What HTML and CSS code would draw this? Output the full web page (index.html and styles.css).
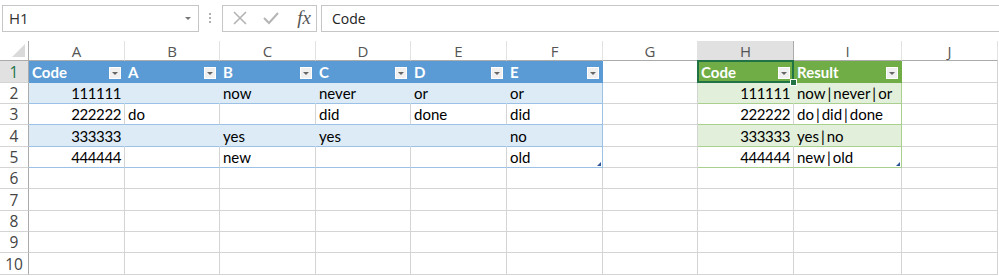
FILE: index.html
```html
<!DOCTYPE html>
<html lang="en">
<head>
  <meta charset="UTF-8" />
  <title>Sheet1</title>
  <link rel="stylesheet" href="styles.css">
</head>
<body>
  <div class="formula-bar">
    <div class="name-box">
      <span>H1</span>
      <span class="nb-arrow"></span>
    </div>
    <div class="grip"><i></i><i></i><i></i></div>
    <div class="fx-box">
      <svg class="ico" width="16" height="16" viewBox="0 0 16 16"><path d="M2 2 L14 14 M14 2 L2 14" stroke="#b4b4b4" stroke-width="1.6" fill="none"/></svg>
      <svg class="ico" width="18" height="16" viewBox="0 0 18 16"><path d="M2 8 L7 13 L16 3" stroke="#b4b4b4" stroke-width="2" fill="none"/></svg>
      <span class="fx">fx</span>
    </div>
    <div class="formula-input">Code</div>
  </div>

  <div class="sheet">
    <!-- column headers -->
    <div class="corner"></div>
    <div class="ch">A</div>
    <div class="ch">B</div>
    <div class="ch">C</div>
    <div class="ch">D</div>
    <div class="ch">E</div>
    <div class="ch">F</div>
    <div class="ch">G</div>
    <div class="ch ch-sel">H</div>
    <div class="ch">I</div>
    <div class="ch">J</div>

    <!-- row 1 -->
    <div class="rh rh-sel">1</div>
    <div class="c bh"><span>Code</span><span class="flt"></span></div>
    <div class="c bh"><span>A</span><span class="flt"></span></div>
    <div class="c bh"><span>B</span><span class="flt"></span></div>
    <div class="c bh"><span>C</span><span class="flt"></span></div>
    <div class="c bh"><span>D</span><span class="flt"></span></div>
    <div class="c bh"><span>E</span><span class="flt"></span></div>
    <div class="c"></div>
    <div class="c gh active"><span>Code</span><span class="flt"></span></div>
    <div class="c gh"><span>Result</span><span class="flt"></span></div>
    <div class="c"></div>

    <!-- row 2 -->
    <div class="rh">2</div>
    <div class="c bb num">111111</div>
    <div class="c bb"></div>
    <div class="c bb">now</div>
    <div class="c bb">never</div>
    <div class="c bb">or</div>
    <div class="c bb b-end">or</div>
    <div class="c"></div>
    <div class="c gb num">111111</div>
    <div class="c gb g-end">now<span class="sep">|</span>never<span class="sep">|</span>or</div>
    <div class="c"></div>

    <!-- row 3 -->
    <div class="rh">3</div>
    <div class="c bw num">222222</div>
    <div class="c bw">do</div>
    <div class="c bw"></div>
    <div class="c bw">did</div>
    <div class="c bw">done</div>
    <div class="c bw b-end">did</div>
    <div class="c"></div>
    <div class="c gw num">222222</div>
    <div class="c gw g-end">do<span class="sep">|</span>did<span class="sep">|</span>done</div>
    <div class="c"></div>

    <!-- row 4 -->
    <div class="rh">4</div>
    <div class="c bb num">333333</div>
    <div class="c bb"></div>
    <div class="c bb">yes</div>
    <div class="c bb">yes</div>
    <div class="c bb"></div>
    <div class="c bb b-end">no</div>
    <div class="c"></div>
    <div class="c gb num">333333</div>
    <div class="c gb g-end">yes<span class="sep">|</span>no</div>
    <div class="c"></div>

    <!-- row 5 -->
    <div class="rh">5</div>
    <div class="c bw num">444444</div>
    <div class="c bw"></div>
    <div class="c bw">new</div>
    <div class="c bw"></div>
    <div class="c bw"></div>
    <div class="c bw b-end resize">old</div>
    <div class="c"></div>
    <div class="c gw num">444444</div>
    <div class="c gw g-end resize">new<span class="sep">|</span>old</div>
    <div class="c"></div>

    <div class="rh">6</div>
    <div class="c"></div><div class="c"></div><div class="c"></div><div class="c"></div><div class="c"></div>
    <div class="c"></div><div class="c"></div><div class="c"></div><div class="c"></div><div class="c"></div>

    <div class="rh">7</div>
    <div class="c"></div><div class="c"></div><div class="c"></div><div class="c"></div><div class="c"></div>
    <div class="c"></div><div class="c"></div><div class="c"></div><div class="c"></div><div class="c"></div>

    <div class="rh">8</div>
    <div class="c"></div><div class="c"></div><div class="c"></div><div class="c"></div><div class="c"></div>
    <div class="c"></div><div class="c"></div><div class="c"></div><div class="c"></div><div class="c"></div>

    <div class="rh">9</div>
    <div class="c"></div><div class="c"></div><div class="c"></div><div class="c"></div><div class="c"></div>
    <div class="c"></div><div class="c"></div><div class="c"></div><div class="c"></div><div class="c"></div>

    <div class="rh">10</div>
    <div class="c"></div><div class="c"></div><div class="c"></div><div class="c"></div><div class="c"></div>
    <div class="c"></div><div class="c"></div><div class="c"></div><div class="c"></div><div class="c"></div>
  </div>
</body>
</html>
```

FILE: styles.css
```css
body {
  margin: 0;
  background: #fff;
  font-family: 'Lato', sans-serif;
  color: #000;
  width: 999px;
  overflow: hidden;
}

/* formula bar */
.formula-bar {
  display: flex;
  align-items: center;
  height: 41px;
  box-sizing: border-box;
}

.name-box {
  display: flex;
  align-items: center;
  justify-content: space-between;
  margin-left: 2px;
  margin-top: -5px;
  width: 197px;
  height: 27px;
  box-sizing: border-box;
  border: 1px solid #c6c6c6;
  padding: 0 7px 0 6px;
  font-family: 'Open Sans', sans-serif;
  font-size: 15px;
  color: #333;
}

.nb-arrow {
  width: 0;
  height: 0;
  border-left: 3px solid transparent;
  border-right: 3px solid transparent;
  border-top: 3px solid #777;
}

.grip {
  display: flex;
  flex-direction: column;
  gap: 2px;
  margin: -5px 11px 0 10px;
}

.grip i {
  width: 2px;
  height: 2px;
  background: #b0b0b0;
}

.fx-box {
  display: flex;
  align-items: center;
  gap: 14px;
  width: 95px;
  height: 27px;
  margin-top: -5px;
  box-sizing: border-box;
  border: 1px solid #c6c6c6;
  padding: 0 5px 0 9px;
}

.fx {
  font-family: 'Liberation Serif', serif;
  font-style: italic;
  font-size: 19px;
  color: #555;
  margin-left: auto;
}

.formula-input {
  flex: 1;
  height: 27px;
  margin: -5px -2px 0 4px;
  box-sizing: border-box;
  border: 1px solid #c6c6c6;
  padding: 3px 10px;
  font-family: 'Open Sans', sans-serif;
  font-size: 14px;
  color: #222;
}

/* grid */
.sheet {
  display: grid;
  grid-template-columns: 29px 96px 95px 96px 95px 96px 96px 95px 96px 108px 96px;
  grid-template-rows: 20px 22px 21px 21px 22px 21px 21px 22px 21px 21px 22px;
}

.corner {
  position: relative;
  border-right: 1px solid #ababab;
  border-bottom: 1px solid #ababab;
}

.corner::after {
  content: '';
  position: absolute;
  right: 3px;
  bottom: 3px;
  width: 0;
  height: 0;
  border-left: 13px solid transparent;
  border-bottom: 13px solid #dadada;
}

.ch {
  display: flex;
  align-items: center;
  justify-content: center;
  box-sizing: border-box;
  border-right: 1px solid #e2e2e2;
  border-bottom: 1px solid #ababab;
  font-family: 'Open Sans', sans-serif;
  font-size: 15px;
  color: #555;
}

.ch-sel {
  background: #e1e1e1;
  border-right-color: #ababab;
}

.rh {
  display: flex;
  align-items: center;
  justify-content: center;
  box-sizing: border-box;
  border-right: 1px solid #ababab;
  border-bottom: 1px solid #d4d4d4;
  font-family: 'Open Sans', sans-serif;
  font-size: 15.5px;
  color: #444;
}

.rh-sel {
  background: #e1e1e1;
  color: #217346;
}

.c {
  display: flex;
  align-items: flex-end;
  box-sizing: border-box;
  border-right: 1px solid #d4d4d4;
  border-bottom: 1px solid #d4d4d4;
  padding: 0 3px 1px 3px;
  font-size: 15px;
  line-height: 18px;
  white-space: nowrap;
  overflow: hidden;
}

.num {
  justify-content: flex-end;
  letter-spacing: -0.4px;
}

.sep {
  padding: 0 2px;
}

/* blue table */
.bh {
  background: #5b9bd5;
  border-right-color: #5b9bd5;
  border-bottom-color: #5b9bd5;
  color: #fff;
  font-weight: 700;
  justify-content: space-between;
  align-items: center;
  padding-bottom: 0;
}

.bb {
  background: #ddebf7;
  border-right-color: #ddebf7;
  border-bottom-color: #9bc2e6;
}

.bw {
  border-bottom-color: #9bc2e6;
}

.b-end {
  border-right-color: #9bc2e6;
}

/* green table */
.gh {
  background: #70ad47;
  border-right-color: #70ad47;
  border-bottom-color: #70ad47;
  color: #fff;
  font-weight: 700;
  justify-content: space-between;
  align-items: center;
  padding-bottom: 0;
}

.gb {
  background: #e2efda;
  border-right-color: #e2efda;
  border-bottom-color: #a9d08e;
}

.gw {
  border-bottom-color: #a9d08e;
}

.g-end {
  border-right-color: #a9d08e;
}

.flt {
  position: relative;
  width: 12px;
  height: 12px;
  margin-top: 3px;
  background: #f0f0f0;
  border: 1px solid #fff;
  box-sizing: border-box;
}

.flt::after {
  content: '';
  position: absolute;
  left: 2px;
  top: 4px;
  border-left: 3px solid transparent;
  border-right: 3px solid transparent;
  border-top: 3px solid #666;
}

/* selected cell */
.active {
  position: relative;
  overflow: visible;
}

.active::before {
  content: '';
  position: absolute;
  left: -1px;
  top: -1px;
  right: -1px;
  bottom: -1px;
  border: 2px solid #217346;
}

.active::after {
  content: '';
  position: absolute;
  right: -4px;
  bottom: -4px;
  width: 5px;
  height: 5px;
  background: #217346;
  border: 1px solid #fff;
  z-index: 2;
}

.resize {
  position: relative;
}

.resize::after {
  content: '';
  position: absolute;
  right: 1px;
  bottom: 1px;
  width: 0;
  height: 0;
  border-left: 4px solid transparent;
  border-bottom: 4px solid #2f5597;
}
```
